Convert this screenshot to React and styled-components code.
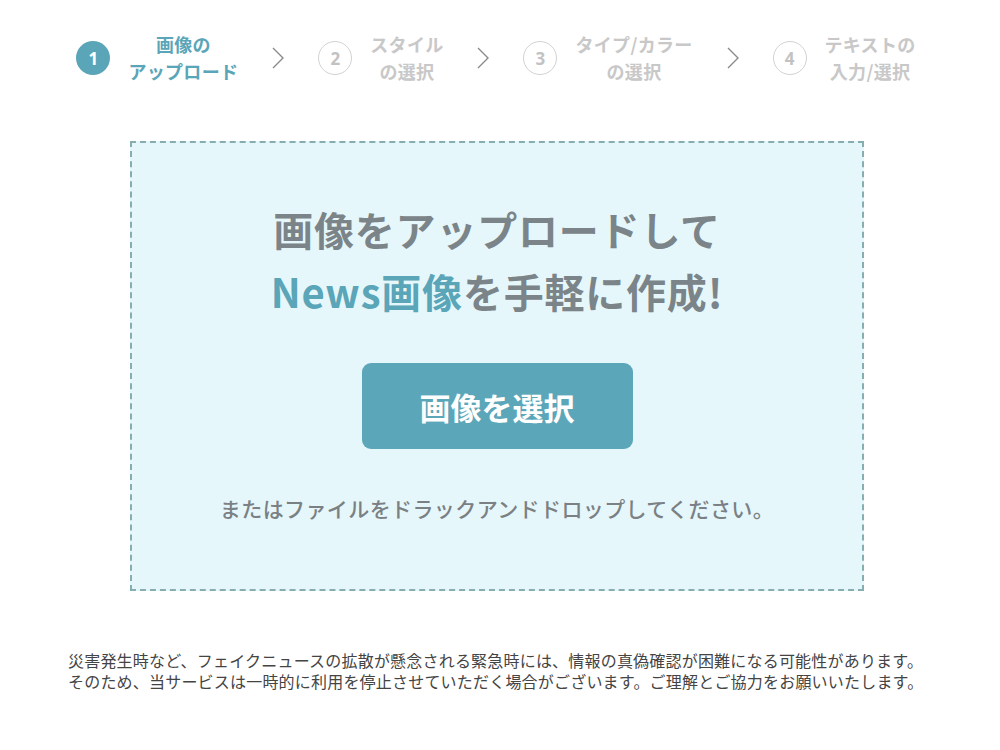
import React from 'react';
import styled, { createGlobalStyle } from 'styled-components';

const GlobalStyle = createGlobalStyle`
    body {
        margin: 0;
        background: #fff;
        font-family: "Noto Sans CJK JP", "Noto Sans", sans-serif;
    }
`;

const Page = styled.div`
    width: 1000px;
    padding-top: 31px;
`;

const Steps = styled.div`
    display: flex;
    align-items: center;
    justify-content: center;
    gap: 33px;
    padding-right: 8px;
    height: 54px;
`;

const Step = styled.div`
    display: flex;
    align-items: center;
    gap: 18px;
`;

const Circle = styled.div`
    width: 34px;
    height: 34px;
    box-sizing: border-box;
    border-radius: 50%;
    display: flex;
    align-items: center;
    justify-content: center;
    font-size: 17px;
    font-weight: 700;
    font-family: "Noto Sans", sans-serif;
    background: ${p => (p.$active ? '#5aa5b8' : 'transparent')};
    border: ${p => (p.$active ? 'none' : '1.5px solid #d2d2d2')};
    color: ${p => (p.$active ? '#fff' : '#c2c2c2')};
`;

const Label = styled.div`
    font-size: 18px;
    line-height: 27px;
    letter-spacing: 0.3px;
    font-weight: 700;
    text-align: center;
    color: ${p => (p.$active ? '#5aa5b8' : '#c8c8c8')};
    white-space: nowrap;
`;

const Chevron = styled.svg`
    width: 14px;
    height: 24px;
    flex: none;
`;

const DropZone = styled.div`
    width: 734px;
    height: 450px;
    box-sizing: border-box;
    margin: 56px 0 0 130px;
    background: #e6f7fb;
    border: 2px dashed #86aeb1;
    display: flex;
    flex-direction: column;
    align-items: center;
    padding-top: 55px;
`;

const Heading = styled.h1`
    margin: 0;
    font-size: 40px;
    line-height: 62px;
    letter-spacing: 0.8px;
    font-weight: 700;
    color: #7b8488;
    text-align: center;
`;

const Accent = styled.span`
    color: #5aa5b8;
`;

const SelectButton = styled.button`
    margin-top: 41px;
    width: 271px;
    height: 86px;
    border: none;
    border-radius: 9px;
    background: #5ba6b9;
    color: #fff;
    font-family: inherit;
    font-size: 31px;
    font-weight: 700;
    cursor: pointer;
`;

const Hint = styled.p`
    margin: 44px 0 0;
    font-size: 21px;
    line-height: 30px;
    letter-spacing: 0.4px;
    font-weight: 500;
    color: #7a8083;
`;

const Notice = styled.p`
    width: 864px;
    margin: 59px auto 0;
    font-size: 16px;
    line-height: 21px;
    letter-spacing: 0.2px;
    color: #444;
`;

const steps = [
    { n: 1, lines: ['画像の', 'アップロード'] },
    { n: 2, lines: ['スタイル', 'の選択'] },
    { n: 3, lines: ['タイプ/カラー', 'の選択'] },
    { n: 4, lines: ['テキストの', '入力/選択'] },
];

const Arrow = () => (
    <Chevron viewBox="0 0 14 24">
        <polyline points="2,2 12,12 2,22" fill="none" stroke="#8a8a8a" strokeWidth="1.4" />
    </Chevron>
);

const App = () => {
    return (
        <Page>
            <GlobalStyle />
            <Steps>
                {steps.map((s, i) => (
                    <React.Fragment key={s.n}>
                        {i > 0 && <Arrow />}
                        <Step>
                            <Circle $active={s.n === 1}>{s.n}</Circle>
                            <Label $active={s.n === 1}>
                                {s.lines[0]}
                                <br />
                                {s.lines[1]}
                            </Label>
                        </Step>
                    </React.Fragment>
                ))}
            </Steps>
            <DropZone>
                <Heading>
                    画像をアップロードして
                    <br />
                    <Accent>News画像</Accent>を手軽に作成!
                </Heading>
                <SelectButton>画像を選択</SelectButton>
                <Hint>またはファイルをドラックアンドドロップしてください。</Hint>
            </DropZone>
            <Notice>
                災害発生時など、フェイクニュースの拡散が懸念される緊急時には、情報の真偽確認が困難になる可能性があります。
                <br />
                そのため、当サービスは一時的に利用を停止させていただく場合がございます。ご理解とご協力をお願いいたします。
            </Notice>
        </Page>
    );
};

export default App;
